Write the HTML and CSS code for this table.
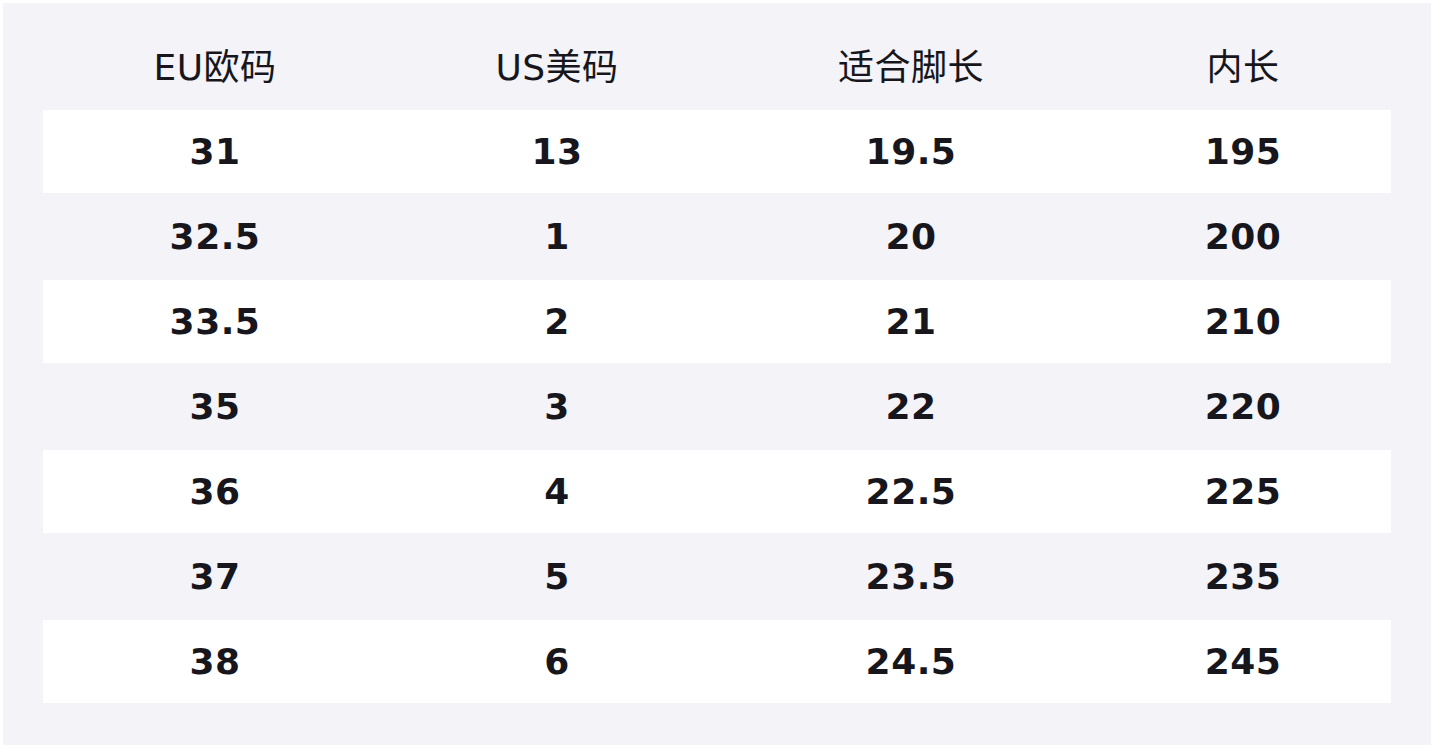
FILE: index.html
```html
<!DOCTYPE html>
<html lang="zh-CN">
<head>
<meta charset="utf-8">
<title>尺码表</title>
<link rel="stylesheet" href="styles.css">
</head>
<body>
<div class="panel">
  <div class="row head">
    <div class="c c1">EU欧码</div>
    <div class="c c2">US美码</div>
    <div class="c c3">适合脚长</div>
    <div class="c c4">内长</div>
  </div>
  <div class="row odd"><div class="c c1">31</div><div class="c c2">13</div><div class="c c3">19.5</div><div class="c c4">195</div></div>
  <div class="row even"><div class="c c1">32.5</div><div class="c c2">1</div><div class="c c3">20</div><div class="c c4">200</div></div>
  <div class="row odd"><div class="c c1">33.5</div><div class="c c2">2</div><div class="c c3">21</div><div class="c c4">210</div></div>
  <div class="row even"><div class="c c1">35</div><div class="c c2">3</div><div class="c c3">22</div><div class="c c4">220</div></div>
  <div class="row odd"><div class="c c1">36</div><div class="c c2">4</div><div class="c c3">22.5</div><div class="c c4">225</div></div>
  <div class="row even"><div class="c c1">37</div><div class="c c2">5</div><div class="c c3">23.5</div><div class="c c4">235</div></div>
  <div class="row odd"><div class="c c1">38</div><div class="c c2">6</div><div class="c c3">24.5</div><div class="c c4">245</div></div>
</div>
</body>
</html>
```
FILE: styles.css
```css
html, body {
  margin: 0;
  padding: 0;
  background: #ffffff;
}
body {
  padding: 3px;
  font-family: "DejaVu Sans", "Noto Sans CJK SC", sans-serif;
  color: #16161c;
}
.panel {
  background: #f3f3f8;
  height: 742px;
  box-sizing: border-box;
  padding: 20px 40px 0 40px;
}
.row {
  display: grid;
  grid-template-columns: 344px 340px 368px 296px;
  align-items: center;
  box-sizing: border-box;
}
.c {
  text-align: center;
}
.head {
  height: 87px;
  padding-bottom: 6px;
  font-size: 36px;
  font-weight: normal;
  letter-spacing: 0.5px;
}
.odd {
  height: 83px;
  background: #ffffff;
}
.even {
  height: 87px;
}
.odd, .even {
  font-size: 36px;
  font-weight: bold;
  letter-spacing: 0.5px;
}
```
